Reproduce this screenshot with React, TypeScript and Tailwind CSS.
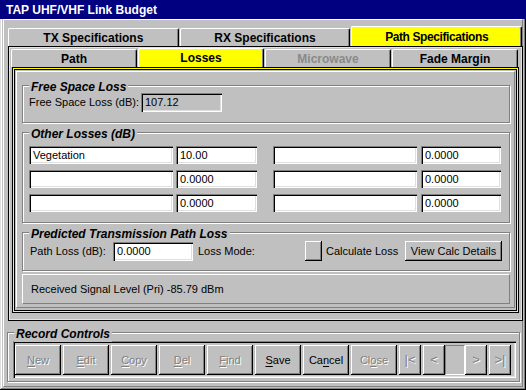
import React from 'react';

const raised = 'shadow-[inset_-1px_-1px_0_#000,inset_1px_1px_0_#fff,inset_-2px_-2px_0_#808080]';
const sunken = 'shadow-[inset_1px_1px_0_#808080,inset_2px_2px_0_#000,inset_-1px_-1px_0_#fff,inset_-2px_-2px_0_#dfdfdf]';
const etched = 'border border-[#808080] shadow-[inset_1px_1px_0_#fff,1px_1px_0_#fff]';

function Tab({ label, active, disabled, h }: { label: string; active?: boolean; disabled?: boolean; h: string }) {
  return (
    <div
      className={`w-[171px] ${h} flex items-center justify-center rounded-t-[2px] border-t border-l border-white border-r border-r-black shadow-[inset_-1px_0_0_#808080] text-[12px] font-bold ${
        active ? 'bg-[#ffff00] tracking-[-0.4px]' : 'bg-[#c0c0c0]'
      } ${disabled ? 'text-[#808080]' : 'text-black'}`}
    >
      {label}
    </div>
  );
}

function SubTab({ label, active, disabled }: { label: string; active?: boolean; disabled?: boolean }) {
  return (
    <div
      className={`w-[126px] ${active ? 'h-[19px] bg-[#ffff00]' : 'h-[18px] bg-[#c0c0c0]'} flex items-center justify-center rounded-t-[2px] border-t border-l border-white border-r border-r-black shadow-[inset_-1px_0_0_#808080] text-[12px] font-bold ${
        disabled ? 'text-[#8a8a8a]' : 'text-black'
      }`}
    >
      {label}
    </div>
  );
}

function Group({ title, className, children }: { title: string; className: string; children?: React.ReactNode }) {
  return (
    <div className={`relative ${etched} ${className}`}>
      <span className="absolute top-[-7px] left-[6px] px-[2px] bg-[#c0c0c0] text-[12px] leading-[16px] font-bold italic">
        {title}
      </span>
      {children}
    </div>
  );
}

function Field({ value, w, h = 'h-[18px]', gray }: { value?: string; w: string; h?: string; gray?: boolean }) {
  return (
    <div className={`${w} ${h} ${gray ? 'bg-[#c0c0c0]' : 'bg-white'} ${sunken} flex items-center pl-[4px] text-[11px]`}>
      {value}
    </div>
  );
}

function RecBtn({ pre = '', u, post = '', enabled }: { pre?: string; u: string; post?: string; enabled?: boolean }) {
  return (
    <div
      className={`w-[46px] h-[30px] bg-[#c0c0c0] ${raised} flex items-center justify-center text-[11px] ${
        enabled ? 'text-black' : 'text-[#808080] [text-shadow:1px_1px_0_#fff]'
      }`}
    >
      {pre}
      <span className="underline underline-offset-[2px]">{u}</span>
      {post}
    </div>
  );
}

function NavBtn({ label }: { label: string }) {
  return (
    <div className={`w-[22px] h-[30px] bg-[#c0c0c0] ${raised} flex items-center justify-center text-[13px] text-[#808080] [text-shadow:1px_1px_0_#fff]`}>
      {label}
    </div>
  );
}

export default function App() {
  return (
    <div className="w-[526px] h-[390px] bg-[#c0c0c0] flex flex-col font-['Liberation_Sans',Arial,sans-serif] text-black overflow-hidden shadow-[inset_-1px_-1px_0_#000,inset_1px_1px_0_#dfdfdf,inset_-2px_-2px_0_#808080,inset_2px_2px_0_#fff]">
      <div className="h-[19px] bg-[#000080] text-white text-[12px] font-bold flex items-center pl-[6px] shrink-0">
        TAP UHF/VHF Link Budget
      </div>

      <div className="flex-1 flex flex-col mx-[3px] mb-[3px] border-t border-l border-white border-r border-b border-r-[#808080] border-b-[#808080]">
        {/* top tab row */}
        <div className="flex items-end gap-[1px] h-[26px] pl-[4px]">
          <Tab label="TX Specifications" h="h-[18px]" />
          <Tab label="RX Specifications" h="h-[18px]" />
          <Tab label="Path Specifications" h="h-[20px]" active />
        </div>

        {/* outer page */}
        <div className="ml-[4px] w-[515px] h-[275px] border border-black">
          <div className="h-full border border-[#ffff00] flex flex-col">
            <div className="flex items-end gap-[1px] h-[19px] pl-[1px]">
              <SubTab label="Path" />
              <SubTab label="Losses" active />
              <SubTab label="Microwave" disabled />
              <SubTab label="Fade Margin" />
            </div>

            {/* inner page */}
            <div className="ml-[2px] w-[507px] h-[246px] border border-black">
              <div className="h-full border border-[#ffff00]">
                <div className="h-full border border-black p-[1px]">
                  <div className="h-[237px] border-t border-l border-white border-r border-b border-r-[#808080] border-b-[#808080] flex flex-col pl-[5px]">
                    <Group title="Free Space Loss" className="mt-[13px] w-[488px] h-[38px]">
                      <div className="flex items-center pt-[7px] pl-[6px]">
                        <span className="w-[112px] text-[11px]">Free Space Loss (dB):</span>
                        <Field value="107.12" w="w-[81px]" h="h-[19px]" gray />
                      </div>
                    </Group>

                    <Group title="Other Losses (dB)" className="mt-[9px] w-[488px] h-[91px]">
                      <div className="flex flex-col gap-[6px] pt-[13px] pl-[6px]">
                        {[
                          ['Vegetation', '10.00'],
                          ['', '0.0000'],
                          ['', '0.0000'],
                        ].map(([name, val], i) => (
                          <div key={i} className="flex">
                            <Field value={name} w="w-[144px]" />
                            <div className="w-[3px]" />
                            <Field value={val} w="w-[81px]" />
                            <div className="w-[16px]" />
                            <Field w="w-[144px]" />
                            <div className="w-[4px]" />
                            <Field value="0.0000" w="w-[80px]" />
                          </div>
                        ))}
                      </div>
                    </Group>

                    <Group title="Predicted Transmission Path Loss" className="mt-[9px] w-[488px] h-[39px]">
                      <div className="flex items-center pt-[8px] pl-[7px] text-[11px]">
                        <span className="w-[83px]">Path Loss (dB):</span>
                        <Field value="0.0000" w="w-[80px]" h="h-[19px]" />
                        <span className="ml-[5px] w-[107px]">Loss Mode:</span>
                        <div className={`w-[17px] h-[20px] bg-[#c0c0c0] ${raised}`} />
                        <span className="ml-[4px] w-[79px]">Calculate Loss</span>
                        <div className={`w-[97px] h-[20px] bg-[#c0c0c0] ${raised} flex items-center justify-center`}>
                          View Calc Details
                        </div>
                      </div>
                    </Group>

                    <div className="mt-[3px] w-[488px] h-[30px] border-t border-l border-white border-r border-b border-r-[#808080] border-b-[#808080] flex items-center pl-[8px] text-[11px]">
                      Received Signal Level (Pri) -85.79 dBm
                    </div>
                  </div>
                </div>
              </div>
            </div>
          </div>
        </div>

        {/* record controls */}
        <Group title="Record Controls" className="mt-[11px] ml-[3px] w-[513px] h-[50px]">
          <div className={`mt-[8px] ml-[5px] w-[503px] h-[37px] ${sunken} pt-[4px] pl-[2px] flex gap-[2px]`}>
            <RecBtn u="N" post="ew" />
            <RecBtn u="E" post="dit" />
            <RecBtn u="C" post="opy" />
            <RecBtn u="D" post="el" />
            <RecBtn u="F" post="ind" />
            <RecBtn u="S" post="ave" enabled />
            <RecBtn pre="Ca" u="n" post="cel" enabled />
            <RecBtn pre="Cl" u="o" post="se" />
            <NavBtn label="|<" />
            <NavBtn label="<" />
            <div className="w-[20px] h-[30px] -mx-[2px] border-t border-t-[#808080] border-l border-l-[#808080] border-b border-b-white border-r border-r-white" />
            <NavBtn label=">" />
            <NavBtn label=">|" />
          </div>
        </Group>
      </div>
    </div>
  );
}
